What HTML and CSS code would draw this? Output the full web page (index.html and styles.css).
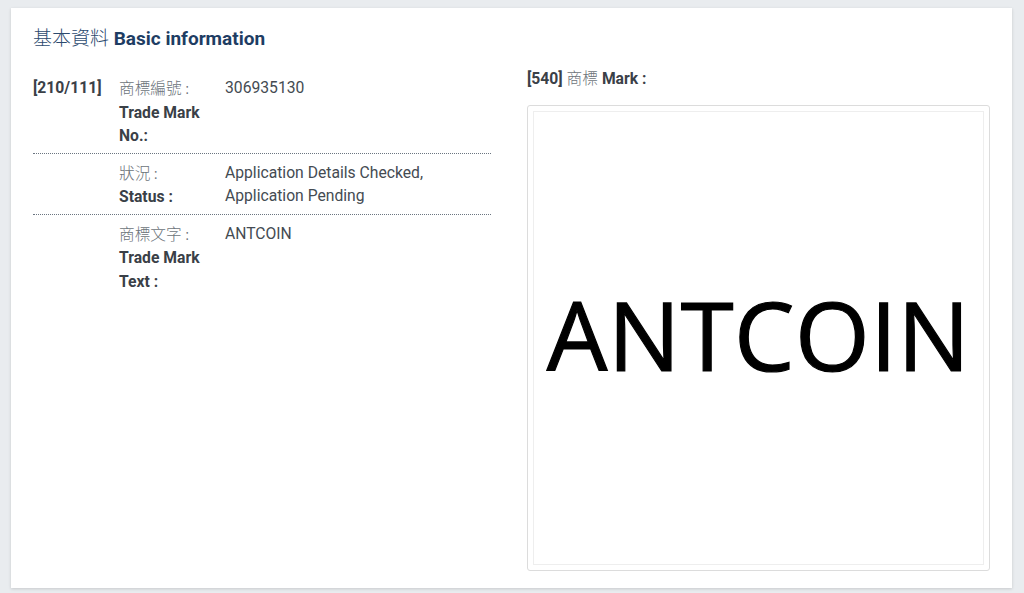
FILE: index.html
```html
<!DOCTYPE html>
<html lang="zh-Hant">
<head>
    <meta charset="UTF-8">
    <title>基本資料 Basic information</title>
    <link rel="stylesheet" href="styles.css">
</head>
<body>
    <div class="card">
        <h3 class="card-title"><span class="zh">基本資料</span> Basic information</h3>
        <div class="row">
            <div class="col">
                <div class="item">
                    <div class="code">[210/111]</div>
                    <div class="label"><span class="zh">商標編號 :</span><br><b>Trade Mark No.:</b></div>
                    <div class="value">306935130</div>
                </div>
                <div class="item">
                    <div class="code"></div>
                    <div class="label"><span class="zh">狀況 :</span><br><b>Status :</b></div>
                    <div class="value">Application Details Checked,<br>Application Pending</div>
                </div>
                <div class="item last">
                    <div class="code"></div>
                    <div class="label"><span class="zh">商標文字 :</span><br><b>Trade Mark Text :</b></div>
                    <div class="value">ANTCOIN</div>
                </div>
            </div>
            <div class="col">
                <div class="mark-title"><b>[540]</b> <span class="zh">商標</span> <b>Mark :</b></div>
                <div class="thumb">
                    <div class="thumb-inner">
                        <span class="mark-word">ANTCOIN</span>
                    </div>
                </div>
            </div>
        </div>
    </div>
</body>
</html>
```

FILE: styles.css
```css
html, body {
    margin: 0;
    height: 100%;
}
body {
    background: #e9ecef;
    font-family: Roboto, "Noto Sans CJK TC", sans-serif;
    font-size: 15.7px;
    color: #444b52;
    padding: 8px 12px 5px 11px;
    box-sizing: border-box;
}
.card {
    background: #fff;
    height: 580px;
    box-sizing: border-box;
    padding: 16px 22px 18px 22px;
    box-shadow: 0 1px 3px rgba(0,0,0,0.15);
}
.card-title {
    margin: 0;
    font-size: 19px;
    font-weight: bold;
    color: #1e3d63;
    line-height: 26px;
}
.card-title .zh {
    font-weight: 300;
    color: #2c4a6e;
}
.zh {
    font-family: "Noto Sans CJK TC", sans-serif;
    font-weight: 300;
    color: #6c737a;
}
.row {
    display: grid;
    grid-template-columns: 458px 463px;
    column-gap: 36px;
    margin-top: 24px;
}
.item {
    display: grid;
    grid-template-columns: 72px 92px 1fr;
    column-gap: 14px;
    line-height: 23.5px;
    padding: 7px 0 5px;
    border-bottom: 1px dotted #6b7580;
}
.item:first-child {
    padding-top: 0;
}
.item.last {
    border-bottom: none;
}
.code {
    font-weight: bold;
    color: #3a4047;
}
.label b {
    color: #3a4047;
}
.mark-title {
    line-height: 24px;
    margin-top: -10px;
    color: #3a4047;
}
.thumb {
    margin-top: 14px;
    border: 1px solid #dcdcdc;
    border-radius: 3px;
    padding: 5px;
    height: 454px;
}
.thumb-inner {
    border: 1px solid #eeeeee;
    height: 100%;
    box-sizing: border-box;
    display: flex;
    align-items: center;
    justify-content: center;
}
.mark-word {
    font-family: "Open Sans", sans-serif;
    font-size: 96px;
    color: #000;
    -webkit-text-stroke: 1.2px #000;
    letter-spacing: 0.5px;
    margin-top: -10px;
}
```
